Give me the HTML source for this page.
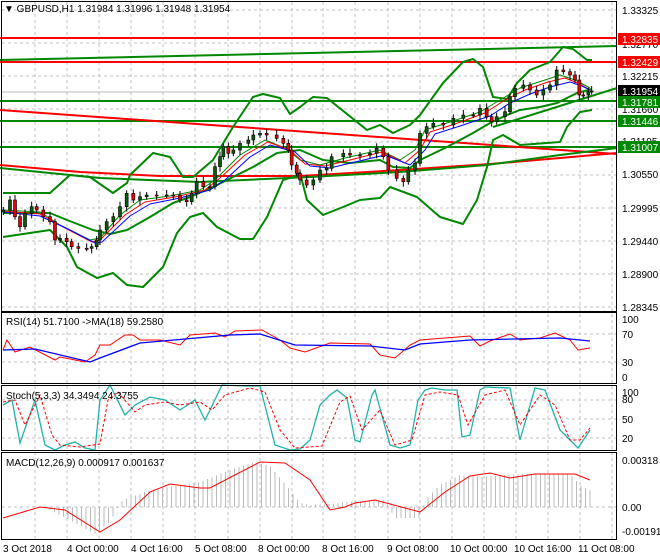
<!DOCTYPE html>
<html><head><style>
body{margin:0;background:#fff;}
svg{display:block;font-family:"Liberation Sans",sans-serif;font-size:10px;}
</style></head><body>
<svg id="s" width="660" height="560" viewBox="0 0 660 560">
<rect width="660" height="560" fill="#fff"/>
<g stroke="#c0c0c0" stroke-dasharray="3,3" stroke-width="1">
<line x1="35" y1="2" x2="35" y2="540"/><line x1="67" y1="2" x2="67" y2="540"/><line x1="99" y1="2" x2="99" y2="540"/><line x1="131" y1="2" x2="131" y2="540"/><line x1="163" y1="2" x2="163" y2="540"/><line x1="195" y1="2" x2="195" y2="540"/><line x1="228" y1="2" x2="228" y2="540"/><line x1="260" y1="2" x2="260" y2="540"/><line x1="292" y1="2" x2="292" y2="540"/><line x1="323" y1="2" x2="323" y2="540"/><line x1="355" y1="2" x2="355" y2="540"/><line x1="388" y1="2" x2="388" y2="540"/><line x1="420" y1="2" x2="420" y2="540"/><line x1="452" y1="2" x2="452" y2="540"/><line x1="484" y1="2" x2="484" y2="540"/><line x1="516" y1="2" x2="516" y2="540"/><line x1="548" y1="2" x2="548" y2="540"/><line x1="580" y1="2" x2="580" y2="540"/><line x1="612" y1="2" x2="612" y2="540"/>
<line x1="2" y1="10" x2="617" y2="10"/><line x1="2" y1="43" x2="617" y2="43"/><line x1="2" y1="76" x2="617" y2="76"/><line x1="2" y1="109" x2="617" y2="109"/><line x1="2" y1="142" x2="617" y2="142"/><line x1="2" y1="175" x2="617" y2="175"/><line x1="2" y1="208" x2="617" y2="208"/><line x1="2" y1="241" x2="617" y2="241"/><line x1="2" y1="274" x2="617" y2="274"/><line x1="2" y1="307" x2="617" y2="307"/>
<line x1="2" y1="334" x2="617" y2="334"/><line x1="2" y1="362" x2="617" y2="362"/>
<line x1="2" y1="400" x2="617" y2="400"/><line x1="2" y1="419" x2="617" y2="419"/><line x1="2" y1="438" x2="617" y2="438"/>
<line x1="2" y1="507" x2="617" y2="507"/>
</g>
<line x1="2" y1="92" x2="617" y2="92" stroke="#bbb"/>
<g fill="none" stroke-linejoin="round">
<line x1="0" y1="38" x2="617" y2="38" stroke="#f00" stroke-width="2"/>
<line x1="0" y1="62" x2="617" y2="62" stroke="#f00" stroke-width="2"/>
<line x1="0" y1="101" x2="617" y2="101" stroke="#080" stroke-width="2"/>
<line x1="0" y1="121" x2="617" y2="121" stroke="#080" stroke-width="2"/>
<line x1="0" y1="147" x2="617" y2="147" stroke="#080" stroke-width="2"/>
<line x1="0" y1="60" x2="617" y2="46" stroke="#080" stroke-width="2"/>
<line x1="0" y1="110" x2="617" y2="154" stroke="#f00" stroke-width="2"/>
<polyline points="0,165 80,172 160,176 300,176 400,170 490,164 560,158 617,153" stroke="#f00" stroke-width="2"/>
<polyline points="0,168 100,178 200,182 310,177 400,172 487,165 560,155 617,148" stroke="#080" stroke-width="2"/>
<line x1="493" y1="127" x2="617" y2="88" stroke="#080" stroke-width="2"/>
<polyline points="3,193 50,193 70,175 90,177 113,193 127,183 130,175 153,153 170,157 183,177 193,177 213,160 233,127 253,97 263,94 280,98 290,114 300,107 313,97 327,98 367,130 380,125 393,133 410,125 420,115 443,83 463,62 473,59 483,67 493,97 507,99 517,83 530,70 550,62 563,47 573,49 587,60 592,60" stroke="#080" stroke-width="2"/>
<polyline points="3,237 50,230 67,247 77,267 97,278 113,273 127,285 143,287 163,267 177,233 190,217 203,213 217,227 240,239 253,239 267,217 283,180 293,177 300,173 307,200 323,215 343,207 360,200 380,198 390,187 417,197 440,217 463,224 477,200 487,167 493,140 503,135 520,145 560,142 567,127 580,112 592,110" stroke="#080" stroke-width="2"/>
<polyline points="3,213 50,213 67,220 93,230 110,234 127,230 150,217 173,203 190,197 213,187 233,177 253,167 277,153 300,150 323,160 350,163 380,160 393,167 410,168 420,160 447,147 473,133 490,123 507,115 520,110 540,107 557,103 577,93 592,89" stroke="#080" stroke-width="2"/>
<polyline points="3,210 40,212 60,225 90,240 100,238 120,215 140,200 170,196 200,190 215,180 240,155 265,140 285,148 300,160 320,165 345,158 380,150 400,160 415,150 425,130 450,122 480,112 500,100 520,88 545,80 560,75 575,80 590,88" stroke="#080" stroke-width="1"/>
<polyline points="3,211 40,214 65,228 92,242 100,240 125,215 145,202 175,197 205,190 220,178 245,155 268,142 290,150 305,164 325,166 350,160 382,152 405,163 420,150 430,132 455,124 485,113 505,100 525,90 548,82 565,78 580,84 590,90" stroke="#f00" stroke-width="1"/>
<polyline points="3,212 40,216 70,230 95,243 102,242 130,216 150,204 180,198 210,190 225,180 250,157 270,145 295,152 310,166 330,168 355,162 385,155 410,165 425,150 435,134 460,126 490,116 510,103 530,94 550,87 570,82 582,86 590,90" stroke="#00f" stroke-width="1"/>
</g>
<g id="candles"></g>
<!-- RSI -->
<polyline points="3,350 7,340 15,352 30,347 55,360 60,357 85,362 95,355 100,345 110,345 125,335 133,335 140,340 160,340 180,345 190,335 215,333 225,337 235,331 262,330 280,340 290,348 305,352 330,343 370,344 380,355 395,358 410,345 420,340 470,336 480,346 490,341 510,334 520,340 540,338 555,333 570,340 578,350 590,348" fill="none" stroke="#f00" stroke-width="1"/>
<polyline points="3,350 35,349 90,362 100,358 140,343 230,335 260,334 295,345 370,346 405,350 420,344 470,340 560,338 590,341" fill="none" stroke="#00f" stroke-width="1.3"/>
<!-- Stoch -->
<polyline points="3,405 12,400 20,443 35,400 45,445 55,450 65,445 75,442 85,448 95,450 100,400 110,385 125,415 135,405 150,397 165,400 180,410 195,400 205,420 210,410 222,385 245,386 260,386 275,445 290,450 300,449 310,440 320,405 330,395 337,390 347,398 355,440 360,442 372,395 375,390 390,445 400,448 410,445 418,400 425,390 432,388 445,390 457,390 462,437 470,435 480,390 485,387 510,388 520,440 535,388 545,390 560,430 578,448 590,430" fill="none" stroke="#20b2aa" stroke-width="1.3"/>
<polyline points="3,402 15,400 25,425 40,395 52,435 60,445 80,447 100,444 108,400 118,392 135,412 145,405 165,402 180,405 200,402 212,410 225,395 250,388 265,392 280,430 295,448 322,446 340,402 350,396 362,430 380,410 395,445 412,440 425,395 440,392 458,395 468,425 485,395 505,390 520,425 540,395 555,405 570,440 580,440 590,428" fill="none" stroke="#f00" stroke-width="1" stroke-dasharray="3,2"/>
<!-- MACD -->
<g id="hist" stroke="#bbb" stroke-width="1"></g>
<polyline points="3,518 40,507 65,510 100,532 120,520 150,492 170,484 200,488 210,488 260,462 285,463 310,480 330,510 345,507 355,503 375,500 390,504 420,512 445,492 470,476 490,473 510,478 535,474 575,474 590,480" fill="none" stroke="#f00" stroke-width="1"/>
<g fill="none" stroke="#000" stroke-width="1">
<rect x="1.5" y="1.5" width="615" height="310"/>
<rect x="1.5" y="312.5" width="615" height="71"/>
<rect x="1.5" y="385.5" width="615" height="65"/>
<rect x="1.5" y="452.5" width="615" height="87"/>
</g>
<g fill="#000">
<text x="4" y="12">▼ GBPUSD,H1  1.31984 1.31996 1.31948 1.31954</text>
<text x="6" y="325">RSI(14) 51.7100  -&gt;MA(18) 59.2580</text>
<text x="6" y="399">Stoch(5,3,3) 34.3494 24.3755</text>
<text x="6" y="466">MACD(12,26,9) 0.000917 0.001637</text>
<text x="622" y="14">1.33325</text><text x="622" y="48">1.32770</text><text x="622" y="80">1.32215</text><text x="622" y="113">1.31660</text><text x="622" y="145">1.31105</text><text x="622" y="178">1.30550</text><text x="622" y="212">1.29995</text><text x="622" y="245">1.29440</text><text x="622" y="278">1.28900</text><text x="622" y="311">1.28345</text>
<text x="622" y="323">100</text><text x="622" y="338">70</text><text x="622" y="366">30</text><text x="622" y="381">0</text>
<text x="622" y="396">100</text><text x="622" y="403">80</text><text x="622" y="423">50</text><text x="622" y="442">20</text>
<text x="622" y="464">0.00318</text><text x="622" y="511">0.00</text><text x="622" y="535">-0.001918</text>
</g>
<rect x="618" y="33" width="42" height="12" fill="#f00"/><text x="622" y="43" fill="#fff">1.32835</text>
<rect x="618" y="56" width="42" height="12" fill="#f00"/><text x="622" y="66" fill="#fff">1.32429</text>
<rect x="618" y="85" width="42" height="12" fill="#000"/><text x="622" y="95" fill="#fff">1.31954</text>
<rect x="618" y="96" width="42" height="12" fill="#080"/><text x="622" y="106" fill="#fff">1.31781</text>
<rect x="618" y="115" width="42" height="12" fill="#080"/><text x="622" y="125" fill="#fff">1.31446</text>
<rect x="618" y="141" width="42" height="12" fill="#080"/><text x="622" y="151" fill="#fff">1.31007</text>
<g fill="#000">
<text x="3" y="552">3 Oct 2018</text><text x="67" y="552">4 Oct 00:00</text><text x="131" y="552">4 Oct 16:00</text><text x="195" y="552">5 Oct 08:00</text><text x="258" y="552">8 Oct 00:00</text><text x="322" y="552">8 Oct 16:00</text><text x="387" y="552">9 Oct 08:00</text><text x="450" y="552">10 Oct 00:00</text><text x="514" y="552">10 Oct 16:00</text><text x="578" y="552">11 Oct 08:00</text>
</g>
</svg>
<script>
(function(){
var NS="http://www.w3.org/2000/svg";
function el(t,a,p){var e=document.createElementNS(NS,t);for(var k in a)e.setAttribute(k,a[k]);p.appendChild(e);return e;}
var z1=[[10,630],[30,600],[45,650],[60,680],[75,640],[95,620],[110,630],[130,650],[150,665],[165,720],[180,715],[200,725],[215,740],[235,745],[260,745],[275,740],[290,720],[300,690],[320,665],[340,650],[360,620],[380,580],[400,600],[420,590],[440,585],[470,585],[500,585],[520,585],[540,600],[560,605],[575,580],[590,545],[610,560],[630,560],[645,500],[660,470],[670,440],[685,460],[700,450],[720,430],[745,420],[760,405],[780,400],[800,405],[830,415],[850,430],[865,450],[875,495],[890,520]];
var z2=[[0,540],[20,555],[40,540],[60,510],[80,505],[95,470],[130,460],[150,465],[180,465],[210,460],[230,445],[250,470],[265,510],[290,535],[310,545],[325,510],[345,490],[360,400],[380,380],[400,370],[430,375],[460,355],[490,345],[520,345],[540,325],[560,350],[575,365],[590,350],[615,335],[630,290],[645,265],[670,255],[690,270],[710,285],[730,270],[750,255],[770,210],[790,215],[810,225],[825,240],[838,285],[850,285],[865,275],[875,273]];
var pts=[];z1.forEach(function(p){pts.push([p[0]/3,p[1]/3]);});z2.forEach(function(p){pts.push([p[0]/3+300,p[1]/3]);});
var g=document.getElementById("candles");var prev=pts[0][1]+2;
pts.forEach(function(p,i){var x=p[0],c=p[1],o=prev;var top=Math.min(o,c)-3-(i%3),bot=Math.max(o,c)+3+(i%2)*2;
el("line",{x1:x,y1:top,x2:x,y2:bot,stroke:"#000"},g);
var up=c<o;var h=Math.max(1,Math.abs(c-o));
el("rect",{x:x-1.5,y:Math.min(o,c),width:3,height:h,fill:up?"#0a5a0a":"#e00",stroke:"#000","stroke-width":0.6},g);prev=c;});
var kp=[[50,510],[70,520],[95,534],[110,522],[118,507],[123,500],[150,490],[200,482],[230,470],[255,462],[270,466],[290,490],[300,503],[310,505],[330,504],[345,502],[385,500],[395,518],[420,518],[425,500],[440,485],[460,475],[480,477],[520,474],[570,474],[580,485],[593,492]];
function v(x){for(var i=0;i<kp.length-1;i++){if(x>=kp[i][0]&&x<=kp[i+1][0]){var t=(x-kp[i][0])/(kp[i+1][0]-kp[i][0]);return kp[i][1]+t*(kp[i+1][1]-kp[i][1]);}}return 507;}
var h=document.getElementById("hist");
for(var x=50;x<=593;x+=4.5){el("line",{x1:x,y1:507,x2:x,y2:v(x)},h);}
})();
</script>
</body></html>
